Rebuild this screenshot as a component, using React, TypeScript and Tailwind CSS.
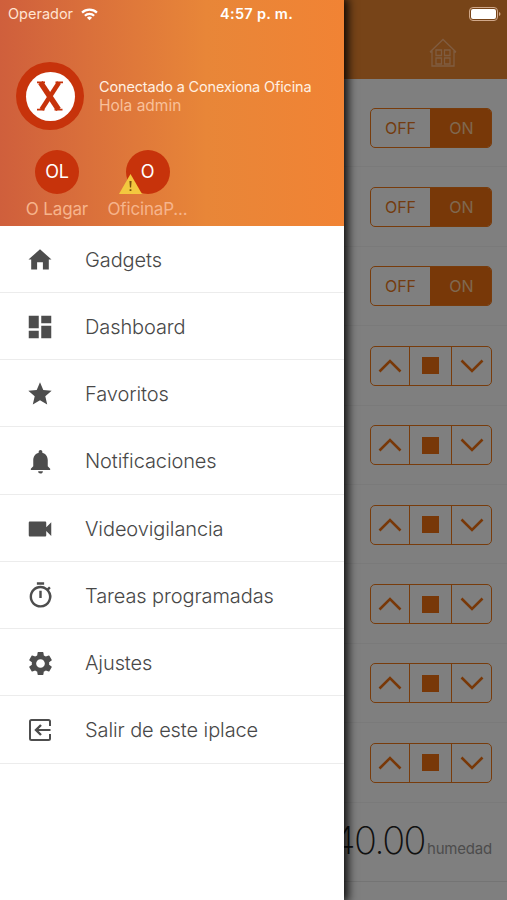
import { MdDashboard, MdStar, MdNotifications, MdVideocam, MdOutlineTimer, MdSettings } from "react-icons/md";
import type { ReactNode } from "react";

const HomeIcon = () => (
  <svg viewBox="0 0 24 24" className="size-6" fill="currentColor">
    <path d="M12 1.2 23.5 11.6H20.8V21.5H14.9V14.2H9.1V21.5H3.2V11.6H.5Z" />
  </svg>
);

const ExitIcon = () => (
  <svg viewBox="0 0 24 24" className="size-6" fill="none" stroke="currentColor" strokeWidth="2">
    <path d="M22 8V3.5A1.5 1.5 0 0 0 20.5 2H3.5A1.5 1.5 0 0 0 2 3.5V20.5A1.5 1.5 0 0 0 3.5 22H20.5A1.5 1.5 0 0 0 22 20.5V16M22.5 12H8" />
    <path d="M13 7 8 12 13 17" strokeWidth="2.4" />
  </svg>
);

const menu: { label: string; icon: ReactNode }[] = [
  { label: "Gadgets", icon: <HomeIcon /> },
  { label: "Dashboard", icon: <MdDashboard size={30} /> },
  { label: "Favoritos", icon: <MdStar size={28} /> },
  { label: "Notificaciones", icon: <MdNotifications size={29} /> },
  { label: "Videovigilancia", icon: <MdVideocam size={30} /> },
  { label: "Tareas programadas", icon: <MdOutlineTimer size={29} /> },
  { label: "Ajustes", icon: <MdSettings size={29} /> },
  { label: "Salir de este iplace", icon: <ExitIcon /> },
];

const rows = ["switch", "switch", "switch", "blind", "blind", "blind", "blind", "blind", "blind"];

const Switch = () => (
  <div className="flex h-10 w-[122px] overflow-hidden rounded-[5px] border border-[#f07818] text-base">
    <span className="flex w-[59px] items-center justify-center text-[#e87820]">OFF</span>
    <span className="flex flex-1 items-center justify-center bg-[#f07010] pl-0.5 text-[#ffd0a0]">ON</span>
  </div>
);

const Blind = () => (
  <div className="flex h-10 w-[122px] rounded-[5px] border border-[#f07818] text-[#f07010]">
    <span className="flex w-[38px] items-center justify-center">
      <svg viewBox="0 0 24 14" className="h-[14px] w-6" fill="none" stroke="currentColor" strokeWidth="2.6">
        <path d="M1.500 12.500 12 2 22.500 12.500" />
      </svg>
    </span>
    <span className="flex w-[43px] items-center justify-center border-x border-[#f07818]">
      <i className="size-[17px] bg-[#f07010]" />
    </span>
    <span className="flex flex-1 items-center justify-center">
      <svg viewBox="0 0 24 14" className="h-[14px] w-6" fill="none" stroke="currentColor" strokeWidth="2.6">
        <path d="M1.500 1.500 12 12 22.500 1.500" />
      </svg>
    </span>
  </div>
);

const HouseIcon = () => (
  <svg viewBox="0 0 28 30" className="h-[30px] w-7" fill="none" stroke="#ffb880" strokeWidth="1.300">
    <path d="M1 14 14 1.500 27 14M3 12V28H25V12M1 14H3M25 14H27" />
    <path d="M7 12H12.500V17.500H7ZM15.500 12H21V17.500H15.500ZM7 20H12.500V26H7ZM15.500 20H21V26H15.500Z" />
  </svg>
);

const StatusBar = () => (
  <div className="absolute inset-x-0 top-0 flex h-7 items-center pl-2 text-white">
    <span className="text-[14.5px] text-[#ffe4d2]">Operador</span>
    <svg viewBox="0 0 18 14" className="ml-2 h-[13px] w-[17px]" fill="none" stroke="white" strokeWidth="2.400">
      <path d="M1 5A11.500 11.500 0 0 1 17 5M4 8.300A7.200 7.200 0 0 1 14 8.300" />
      <path d="M9 13.300 6.200 10.500A4 4 0 0 1 11.800 10.500Z" fill="white" stroke="none" />
    </svg>
    <span className="absolute left-[220px] text-[14.5px] font-semibold tracking-[0.3px]">4:57 p. m.</span>
    <svg viewBox="0 0 32 14" className="absolute left-[469px] h-[14px] w-8" fill="white">
      <rect x=".5" y=".5" width="28" height="13" rx="3.500" fill="none" stroke="#d0a88a" />
      <rect x="2" y="2" width="25" height="10" rx="2" />
      <path d="M30 5V9Q31.500 8.500 31.500 7T30 5Z" fill="#d0a88a" />
    </svg>
  </div>
);

const Drawer = () => (
  <aside className="absolute inset-y-0 left-0 flex w-[343.5px] flex-col bg-white shadow-[2px_0_9px_2px_rgba(0,0,0,0.9)]">
    <header className="h-[225.5px] shrink-0 bg-linear-to-r from-[#cf5f3c] via-[#e88638] via-60% to-[#f18334] pt-[62px]">
      <div className="flex items-center pl-4">
        <div className="flex size-[68px] items-center justify-center rounded-full bg-[#c7330b]">
          <div className="flex size-[49px] items-center justify-center rounded-full bg-white">
            <svg viewBox="0 0 28 30" className="h-[30px] w-7" fill="none" stroke="#c7330b">
              <path d="M4.500 1.500 22.500 28.500" strokeWidth="5.600" />
              <path d="M23 1.500 5.500 28.500" strokeWidth="4.600" />
              <path d="M1 1.300H9M19.500 1.300H27M1 28.700H8.500M18.500 28.700H26.500" strokeWidth="1.800" />
            </svg>
          </div>
        </div>
        <div className="ml-[15px]">
          <p className="text-[14.5px] leading-[19px] tracking-[-0.15px] whitespace-nowrap text-[#fff0e2]">Conectado a Conexiona Oficina</p>
          <p className="text-[15.5px] leading-[19px] text-[#f8c09a]">Hola admin</p>
        </div>
      </div>
      <div className="mt-5 flex pl-3 text-[17px] tracking-[-0.15px] text-[#f6b48c]">
        <div className="flex w-[90px] flex-col items-center">
          <div className="flex size-11 items-center justify-center rounded-full bg-[#c7330b] text-lg text-white">OL</div>
          <span className="mt-[3px]">O Lagar</span>
        </div>
        <div className="flex w-[91px] flex-col items-center">
          <div className="relative flex size-11 items-center justify-center rounded-full bg-[#c7330b] text-lg text-white">
            O
            <svg viewBox="0 0 23 20" className="absolute bottom-0 -left-[7px] h-5 w-[23px]">
              <path d="M11.500 0 23 20H0Z" fill="#f3c83f" />
              <path d="M10.400 7H12.600L12.100 13.500H10.900ZM10.600 15.200H12.400V17H10.600Z" fill="#7a5010" />
            </svg>
          </div>
          <span className="mt-[3px]">OficinaP...</span>
        </div>
      </div>
    </header>
    <nav className="text-[20px] font-light tracking-[-0.1px] text-[#484848]">
      {menu.map((item) => (
        <a key={item.label} className="flex h-[67.25px] items-center border-b border-[#ececec] pt-[2px] pl-[25px]">
          <span className="mr-[30px] flex w-[30px] justify-center text-[#4d4d4d]">{item.icon}</span>
          <span className="whitespace-nowrap">{item.label}</span>
        </a>
      ))}
    </nav>
  </aside>
);

export default function App() {
  return (
    <div className="relative h-[900px] w-[507px] overflow-hidden bg-white font-['Inter','Liberation_Sans',sans-serif]">
      <main className="flex flex-col">
        <header className="flex h-[79px] items-end justify-end bg-[#ee8830] pr-[50px] pb-[11px]">
          <HouseIcon />
        </header>
        <div className="pt-[9px]">
          {rows.map((type, i) => (
            <div key={i} className="flex h-[79.4px] items-center justify-end border-b border-[#f4f4f4] pt-px pr-[15px]">
              {type === "switch" ? <Switch /> : <Blind />}
            </div>
          ))}
          <div className="flex h-[79.4px] items-center justify-end border-b border-[#e8e8e8] pr-[15px] pb-[3px]">
            <p className="flex items-baseline">
              <span className="text-[38px] font-extralight tracking-[-1.6px] text-[#222]">40.00</span>
              <span className="ml-[2px] text-[15px] tracking-[-0.2px] text-[#999]">humedad</span>
            </p>
          </div>
        </div>
      </main>
      <div className="absolute inset-0 bg-black/50" />
      <Drawer />
      <StatusBar />
    </div>
  );
}
